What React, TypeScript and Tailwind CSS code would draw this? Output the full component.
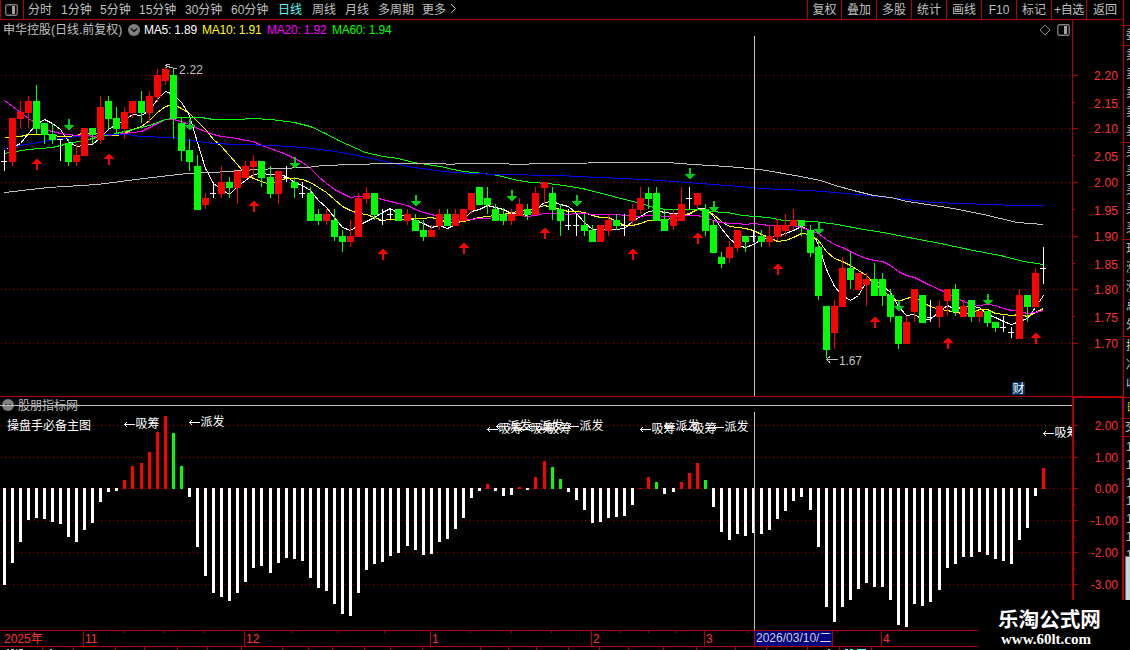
const periods = [
    { label: '分时', width: 'w-[33px]' },
    { label: '1分钟', width: 'w-[39px]' },
    { label: '5分钟', width: 'w-[39px]' },
    { label: '15分钟', width: 'w-[46px]' },
    { label: '30分钟', width: 'w-[46px]' },
    { label: '60分钟', width: 'w-[47px]' },
    { label: '日线', width: 'w-[34px]', active: true },
    { label: '周线', width: 'w-[33px]' },
    { label: '月线', width: 'w-[33px]' },
    { label: '多周期', width: 'w-[44px]' },
    { label: '更多', width: 'w-[27px]' },
]

const tools = [
    { label: '复权', width: 'w-[34px]' },
    { label: '叠加', width: 'w-[35px]' },
    { label: '多股', width: 'w-[35px]' },
    { label: '统计', width: 'w-[35px]' },
    { label: '画线', width: 'w-[35px]' },
    { label: 'F10', width: 'w-[35px]' },
    { label: '标记', width: 'w-[35px]' },
    { label: '+自选', width: 'w-[35px] tracking-[-0.4px]' },
    { label: '返回', width: 'w-[37px]' },
]

type Candle = [kind: string, top: number, bottom: number, high: number, low: number]

// r = up, g = down, w = doji (top and bottom are the same)
const candles: Candle[] = [
    ['w', 161, 161, 150, 171], ['r', 118, 162, 118, 166], ['r', 112, 119, 101, 128], ['r', 101, 113, 96, 128],
    ['g', 101, 129, 85, 134], ['g', 123, 135, 123, 144], ['g', 134, 140, 123, 144], ['w', 139, 139, 139, 161],
    ['g', 143, 162, 139, 166], ['r', 155, 162, 144, 166], ['r', 128, 156, 128, 156], ['g', 128, 135, 128, 144],
    ['r', 107, 140, 96, 144], ['g', 101, 119, 96, 129], ['g', 118, 129, 107, 134], ['r', 112, 129, 107, 139],
    ['r', 101, 113, 101, 118], ['g', 101, 113, 91, 123], ['r', 96, 113, 91, 123], ['r', 75, 97, 69, 102],
    ['r', 69, 81, 67, 85], ['g', 75, 119, 69, 139], ['g', 123, 151, 118, 161], ['g', 150, 162, 139, 171],
    ['g', 166, 210, 155, 210], ['r', 198, 205, 193, 209], ['w', 193, 193, 182, 198], ['r', 182, 194, 166, 198],
    ['g', 182, 188, 177, 198], ['r', 171, 188, 171, 204], ['r', 166, 178, 161, 178], ['r', 161, 167, 155, 178],
    ['g', 161, 178, 161, 187], ['g', 177, 194, 166, 198], ['r', 171, 194, 171, 204], ['w', 177, 177, 166, 182],
    ['g', 182, 188, 177, 198], ['w', 193, 193, 182, 198], ['g', 193, 221, 187, 221], ['g', 214, 221, 209, 225],
    ['r', 214, 221, 209, 225], ['g', 220, 237, 209, 241], ['g', 236, 242, 230, 252], ['r', 236, 242, 220, 247],
    ['r', 198, 237, 193, 237], ['r', 193, 199, 187, 204], ['g', 193, 215, 193, 220], ['w', 220, 220, 209, 225],
    ['w', 214, 214, 209, 219], ['g', 209, 221, 209, 221], ['r', 214, 221, 209, 225], ['g', 220, 231, 214, 231],
    ['g', 230, 237, 220, 241], ['r', 230, 237, 225, 237], ['r', 214, 226, 209, 230], ['g', 214, 226, 209, 226],
    ['r', 214, 226, 209, 226], ['r', 209, 221, 209, 221], ['r', 193, 210, 193, 214], ['g', 187, 205, 187, 205],
    ['g', 198, 205, 187, 214], ['g', 209, 221, 204, 221], ['g', 214, 221, 208, 225], ['r', 214, 221, 209, 225],
    ['r', 204, 216, 198, 216], ['g', 209, 215, 204, 220], ['r', 193, 215, 187, 215], ['r', 182, 188, 182, 204],
    ['g', 193, 210, 187, 220], ['g', 209, 221, 204, 236], ['w', 225, 225, 209, 230], ['w', 225, 225, 213, 236],
    ['g', 225, 231, 214, 236], ['g', 230, 242, 225, 242], ['r', 225, 242, 225, 242], ['r', 220, 231, 214, 236],
    ['g', 220, 226, 214, 230], ['w', 225, 225, 214, 236], ['r', 209, 221, 204, 225], ['r', 198, 210, 187, 214],
    ['g', 193, 199, 187, 209], ['g', 193, 221, 187, 221], ['g', 219, 231, 209, 231], ['r', 214, 226, 209, 230],
    ['r', 204, 221, 187, 221], ['w', 198, 198, 187, 209], ['r', 193, 205, 193, 209], ['g', 209, 231, 204, 236],
    ['g', 225, 253, 220, 253], ['g', 257, 264, 252, 268], ['r', 247, 258, 241, 263], ['r', 230, 248, 230, 252],
    ['g', 236, 242, 236, 252], ['w', 236, 236, 230, 242], ['g', 236, 242, 230, 247], ['r', 236, 242, 225, 247],
    ['r', 225, 237, 219, 241], ['r', 225, 231, 214, 236], ['r', 220, 226, 209, 230], ['g', 220, 226, 220, 236],
    ['g', 230, 253, 225, 257], ['g', 247, 296, 241, 300], ['g', 306, 350, 306, 358], ['r', 306, 333, 300, 349],
    ['r', 268, 307, 257, 307], ['g', 268, 280, 252, 289], ['r', 273, 290, 273, 290], ['r', 279, 285, 273, 306],
    ['g', 279, 296, 263, 296], ['g', 279, 296, 273, 306], ['g', 295, 317, 289, 322], ['g', 316, 344, 316, 349],
    ['r', 322, 344, 316, 344], ['r', 289, 312, 289, 322], ['g', 295, 323, 295, 323], ['w', 317, 317, 300, 322],
    ['r', 306, 317, 300, 327], ['r', 289, 301, 289, 316], ['g', 289, 312, 284, 316], ['r', 306, 317, 300, 317],
    ['g', 300, 317, 300, 322], ['r', 311, 317, 311, 322], ['g', 311, 323, 311, 327], ['g', 322, 328, 322, 332],
    ['w', 327, 327, 316, 332], ['w', 332, 332, 327, 338], ['r', 295, 339, 289, 339], ['g', 295, 307, 295, 322],
    ['r', 273, 307, 268, 307], ['w', 268, 268, 247, 284],
]

const histogram = [
    585, 563, 542, 520, 518, 519, 522, 524, 537, 542, 530, 523, 502, 492, 491, 480, 466, 463, 452, 432,
    416, 433, 466, 497, 547, 576, 593, 597, 601, 593, 582, 568, 566, 573, 563, 558, 559, 561, 578, 588,
    591, 604, 614, 616, 593, 570, 564, 562, 556, 553, 546, 550, 555, 554, 542, 539, 529, 518, 498, 491,
    484, 491, 496, 495, 487, 490, 477, 461, 467, 479, 492, 500, 510, 523, 522, 518, 517, 516, 505, 488,
    477, 482, 494, 492, 482, 473, 463, 480, 507, 532, 540, 534, 536, 533, 534, 530, 519, 511, 501, 497,
    510, 547, 607, 622, 607, 600, 589, 583, 587, 587, 600, 625, 627, 604, 606, 602, 590, 568, 564, 557,
    557, 552, 555, 559, 561, 564, 540, 528, 496, 468,
]
const fallingBars = [21, 22, 68, 69, 81, 87]

const buyArrows = [
    [37, 158], [109, 153], [254, 200], [383, 248], [464, 242], [545, 227],
    [633, 248], [698, 232], [778, 263], [875, 316], [948, 337], [1036, 332],
]
const sellArrows = [
    [69, 119], [190, 119], [295, 157], [416, 195], [512, 190], [577, 195],
    [690, 168], [714, 201], [819, 223], [899, 300], [988, 294],
]

const signals = [
    { x: 124, y: 423, text: '吸筹' },
    { x: 189, y: 421, text: '派发' },
    { x: 487, y: 428, text: '吸筹' },
    { x: 496, y: 425, text: '派发' },
    { x: 519, y: 428, text: '吸筹' },
    { x: 528, y: 425, text: '派发' },
    { x: 536, y: 428, text: '吸筹' },
    { x: 568, y: 425, text: '派发' },
    { x: 640, y: 428, text: '吸筹' },
    { x: 664, y: 425, text: '派发' },
    { x: 681, y: 428, text: '吸筹' },
    { x: 713, y: 426, text: '派发' },
    { x: 1043, y: 432, text: '吸筹' },
]

const ma60 =
    '4,153 28,149 52,147 68,143 84,140 100,136 116,133 132,129 149,125 165,119 181,117 201,117 213,119 237,119 253,118 270,119 294,122 310,126 325,133 338,140 365,152 383,156 398,158 413,162 440,166 453,169 463,171 483,173 498,175 513,179 530,182 548,183 563,185 582,188 613,196 640,203 657,208 667,209 697,209 707,211 727,212 742,215 768,217 783,220 813,221 837,224 863,229 883,232 903,236 940,243 973,250 1000,255 1023,261 1043,264'
const ma120 =
    '4,148 20,145 44,141 68,137 92,134 127,134 140,136 172,137 189,140 213,143 237,144 273,145 303,147 328,150 353,154 380,160 407,166 443,171 470,173 500,174 557,175 580,176 597,177 623,178 660,180 687,182 713,184 740,186 760,188 807,190 823,191 857,194 897,198 933,202 960,203 990,204 1017,205 1043,205'
const ma250 =
    '4,192 48,187 97,184 143,178 187,173 213,172 240,170 277,168 307,167 323,165 353,164 387,163 440,163 450,164 460,163 500,163 517,164 540,163 635,162 667,162 693,164 727,166 760,169 800,176 820,180 835,185 853,190 873,195 890,197 907,201 927,204 953,208 983,214 1017,222 1043,224'

const barX = (i: number) => 4 + 8 * i + Math.floor((i + 0.25) / 16.6)

const closes = candles.map(([kind, top, bottom]) => (kind === 'g' ? bottom : top))

// seed holds the leading values, whose window starts before the first candle
const average = (days: number, seed: number[]) =>
    closes
        .map((_, i) => {
            if (i < days - 1) return `${barX(i)},${seed[i]}`
            const sum = closes.slice(i - days + 1, i + 1).reduce((a, b) => a + b, 0)
            return `${barX(i)},${Math.round(sum / days)}`
        })
        .join(' ')

const ma5 = average(5, [148, 147, 143, 133])
const ma10 = average(10, [137, 137, 136, 134, 134, 134, 135, 136, 136])
const ma20 = average(
    20,
    [100, 106, 112, 118, 123, 129, 131, 133, 134, 135, 134, 136, 135, 135, 134, 133, 132, 131, 127]
)

const PanelIcon = () => (
    <svg width="13" height="12" viewBox="0 0 13 12" fill="none">
        <rect x="0.75" y="0.75" width="11.5" height="10.5" rx="1.5" stroke="#808080" strokeWidth="1.3" />
        <rect x="7" y="2" width="3" height="8" fill="#a0a0a0" />
    </svg>
)

const TopBar = () => (
    <div className="flex h-[20px] shrink-0 border-b border-[#b40000] leading-[20px] text-[#c0c0c0]">
        <div className="flex w-6 items-center border-x border-[#b40000] pl-1">
            <PanelIcon />
        </div>
        <div className="flex flex-1 items-start pl-1">
            {periods.map((p) => (
                <span
                    key={p.label}
                    className={`${p.width} shrink-0 whitespace-nowrap ${p.active ? 'text-[#54fcfc]' : ''}`}>
                    {p.label}
                </span>
            ))}
            <svg width="8" height="11" viewBox="0 0 8 11" fill="none" stroke="#c0c0c0" className="mt-[3px]">
                <path d="M2 1 L6.5 5.5 L2 10" />
            </svg>
        </div>
        {tools.map((t) => (
            <div
                key={t.label}
                className={`${t.width} shrink-0 whitespace-nowrap border-l border-[#b40000] text-center`}>
                {t.label}
            </div>
        ))}
    </div>
)

const InfoRow = () => (
    <div className="flex h-4 items-center whitespace-nowrap pl-[3px] pt-[3px] leading-4">
        <span className="w-[125px] text-[#c0c0c0]">申华控股(日线.前复权)</span>
        <svg width="12" height="12" viewBox="0 0 12 12" fill="none">
            <circle cx="6" cy="6" r="6" fill="#808080" />
            <path d="M3 4.5 L6 7.5 L9 4.5" stroke="#101010" strokeWidth="1.5" />
        </svg>
        <span className="ml-1 w-[58px] tracking-[-0.2px] text-white">MA5: 1.89</span>
        <span className="w-[65px] tracking-[-0.2px] text-[#ffff00]">MA10: 1.91</span>
        <span className="w-[65px] tracking-[-0.2px] text-[#ff00ff]">MA20: 1.92</span>
        <span className="tracking-[-0.2px] text-[#00ff00]">MA60: 1.94</span>
        <div className="ml-auto flex items-center gap-[6px] pr-[2px]">
            <svg width="12" height="12" viewBox="0 0 12 12" fill="none" stroke="#808080">
                <path d="M6 1 L11 6 L6 11 L1 6 Z" />
            </svg>
            <PanelIcon />
        </div>
    </div>
)

const GridLines = ({ rows }: { rows: number[] }) => (
    <g stroke="#a80000" strokeDasharray="1 3">
        {rows.map((y) => (
            <line key={y} x1="1" x2="1072" y1={y + 0.5} y2={y + 0.5} />
        ))}
    </g>
)

const candleColor: Record<string, string> = { r: '#ff0000', g: '#00ff00', w: '#ffffff' }

const PriceChart = () => (
    <svg width="1072" height="360" viewBox="0 36 1072 360" shapeRendering="crispEdges" className="block">
        <GridLines rows={[75, 128, 182, 236, 289, 343]} />
        <g fill="none" strokeWidth="1" transform="translate(0.5 0.5)">
            <polyline points={ma5} stroke="#ffffff" />
            <polyline points={ma10} stroke="#ffff00" />
            <polyline points={ma20} stroke="#ff00ff" />
            <polyline points={ma60} stroke="#00ff00" />
            <polyline points={ma120} stroke="#0000ff" />
            <polyline points={ma250} stroke="#c0c0c0" />
        </g>
        {candles.map(([kind, top, bottom, high, low], i) => (
            <g key={i} fill={candleColor[kind]}>
                <rect x={barX(i)} y={high} width="1" height={low - high} />
                <rect
                    x={barX(i) - 3}
                    y={top}
                    width={kind === 'w' ? 6 : 7}
                    height={Math.max(1, bottom - top)}
                />
            </g>
        ))}
        {buyArrows.map(([x, y]) => (
            <path
                key={x}
                d={`M${x} ${y} l5 6 h-4 v6 h-2 v-6 h-4 Z`}
                fill="#ff0000"
            />
        ))}
        {sellArrows.map(([x, y]) => (
            <path
                key={x}
                d={`M${x} ${y + 12} l5 -6 h-4 v-6 h-2 v6 h-4 Z`}
                fill="#00d010"
            />
        ))}
        <g fill="none" stroke="#c0c0c0">
            <path d="M165.5 65.5 l4 1.5 l7 2 M166 68 v-4 h4" />
            <path d="M826 359.5 h12 M830 356.5 l-3.5 3 l3.5 3" />
            <line x1="754.5" x2="754.5" y1="36" y2="396" />
        </g>
        <g fill="#c0c0c0">
            <text x="179" y="74" textLength="24">2.22</text>
            <text x="839" y="365" textLength="23">1.67</text>
        </g>
        <rect x="1012" y="382" width="13" height="13" fill="#003366" />
        <text x="1012.5" y="393" fill="#ffffff">财</text>
    </svg>
)

const PriceAxis = () => (
    <svg width="50" height="376" viewBox="1073 20 50 376" className="block">
        <g stroke="#b40000" shapeRendering="crispEdges">
            {[75, 128, 182, 236, 289, 343].map((y) => (
                <line key={y} x1="1073" x2="1078" y1={y + 0.5} y2={y + 0.5} />
            ))}
            {[102, 155, 209, 263, 316].map((y) => (
                <line key={y} x1="1073" x2="1075" y1={y + 0.5} y2={y + 0.5} />
            ))}
        </g>
        <g fill="#ff3232">
            {[75, 103, 128, 156, 182, 210, 236, 264, 289, 317, 343].map((y, i) => (
                <text key={y} x="1094" y={y + 5} textLength="24">
                    {(2.2 - i * 0.05).toFixed(2)}
                </text>
            ))}
        </g>
    </svg>
)

const IndicatorHeader = () => (
    <div className="relative flex h-[15px] items-center gap-1 pl-[2px] leading-[15px] text-[#c0c0c0]">
        <svg width="12" height="12" viewBox="0 0 12 12">
            <circle cx="6" cy="6" r="6" fill="#808080" />
            <path d="M3 5 h2 v2 h-2 Z M7 5 h2 v2 h-2 Z" fill="#303030" />
        </svg>
        <span className="pt-[3px]">股朋指标网</span>
        <div className="absolute inset-x-0 top-2 h-px bg-[#c0c0c0]" />
    </div>
)

const IndicatorChart = () => (
    <svg width="1072" height="218" viewBox="0 412 1072 218" shapeRendering="crispEdges" className="block">
        <GridLines rows={[425, 457, 488, 520, 552, 584]} />
        {histogram.map((y, i) => {
            if (y > 489)
                return <rect key={i} x={barX(i) - 1} y="488" width="3" height={y - 488} fill="#ffffff" />
            return (
                <rect
                    key={i}
                    x={barX(i) - 1}
                    y={y}
                    width="3"
                    height={489 - y}
                    fill={fallingBars.includes(i) ? '#00ff00' : '#ff0000'}
                />
            )
        })}
        <text x="7" y="430" fill="#ffffff">操盘手必备主图</text>
        {signals.map(({ x, y, text }) => (
            <g key={x}>
                <path
                    d={`M${x + 1} ${y + 1.5} h10 M${x + 3} ${y - 1} l-2 2.5 l2 2.5`}
                    fill="none"
                    stroke="#ffffff"
                />
                <text x={x + 11.5} y={y + 5} fill="#ffffff">{text}</text>
            </g>
        ))}
        <line x1="754.5" x2="754.5" y1="412" y2="630" stroke="#c0c0c0" />
    </svg>
)

const IndicatorAxis = () => (
    <svg width="48" height="231" viewBox="1074 398 48 231" className="block">
        <g stroke="#b40000" shapeRendering="crispEdges">
            {[425, 457, 488, 520, 552, 584].map((y) => (
                <line key={y} x1="1074" x2="1078" y1={y + 0.5} y2={y + 0.5} />
            ))}
            {[441, 473, 504, 536, 568].map((y) => (
                <line key={y} x1="1074" x2="1075" y1={y + 0.5} y2={y + 0.5} />
            ))}
        </g>
        <g fill="#ff3232" textAnchor="end">
            {[425, 457, 488, 520, 552, 584].map((y, i) => (
                <text key={y} x="1118" y={y + 5}>
                    {(2 - i).toFixed(2)}
                </text>
            ))}
        </g>
    </svg>
)

const months = [
    { label: '2025年', width: 'w-[83px]', pad: 'pl-1' },
    { label: '11', width: 'w-[161px]', pad: 'border-l pl-px' },
    { label: '12', width: 'w-[186px]', pad: 'border-l pl-px' },
    { label: '1', width: 'w-[161px]', pad: 'border-l pl-px' },
    { label: '2', width: 'w-[113px]', pad: 'border-l pl-px' },
    { label: '3', width: 'w-[50px]', pad: 'border-l pl-px' },
]

const dayTicks = [123, 164, 204, 291, 337, 384, 470, 511, 551, 619, 648, 676, 748, 837]
const footerTicks = [
    42, 73, 115, 144, 177, 207, 241, 282, 308, 332, 364, 390, 422, 480, 508, 536, 568, 599, 628, 663, 696,
    735, 766, 807, 839, 871,
]

const TimeAxis = () => (
    <div className="relative h-5 w-[978px]">
        <div className="flex h-[17px] border-y border-[#b40000] leading-[16px] text-[#ff3232]">
            {months.map((m) => (
                <div key={m.label} className={`${m.width} ${m.pad} shrink-0 border-[#b40000]`}>
                    {m.label}
                </div>
            ))}
            <div className="w-[79px] shrink-0 whitespace-nowrap border-x border-[#b40000] bg-[#000080] pl-px leading-[14px] text-[#d0d0d0]">
                2026/03/10/二
            </div>
            <div className="w-12 shrink-0" />
            <div className="border-l border-[#b40000] pl-px">4</div>
        </div>
        <svg
            width="978"
            height="20"
            viewBox="0 0 978 20"
            shapeRendering="crispEdges"
            className="absolute left-0 top-0">
            <g fill="#b40000">
                {dayTicks.map((x) => (
                    <rect key={x} x={x} y="1" width="1" height="2" />
                ))}
                {footerTicks.map((x) => (
                    <rect key={x} x={x} y="17" width="1" height="3" />
                ))}
            </g>
            <path d="M7 19.5 h2 m2 0 h3 m2 0 h1 m2 0 h4 M50 19.5 h2 M828 19.5 h2" stroke="#c0c0c0" />
            <path d="M845 19.5 h3 m2 0 h3 m4 0 h9" stroke="#54fcfc" />
        </svg>
    </div>
)

const quoteGroups = [
    { height: 'h-[20px]', rows: ['委'] },
    { height: 'h-[97px]', rows: ['卖', '卖', '卖', '卖', '卖'] },
    { height: 'h-[97px]', rows: ['买', '买', '买', '买', '买'] },
    { height: 'h-[97px]', rows: ['现', '涨', '涨', '总', '外'] },
    { height: 'h-[61px]', rows: ['换', '净', '收'] },
]

// only the left edge of the quote panel is visible
const QuoteStrip = () => (
    <div className="flex w-[7px] shrink-0 flex-col overflow-hidden border-l border-[#b40000] pt-[25px] text-[#c0c0c0]">
        {quoteGroups.map((g) => (
            <div key={g.rows[0]} className={`${g.height} shrink-0 border-t border-[#b40000] pl-[2px]`}>
                {g.rows.map((r, i) => (
                    <div key={i} className="h-[19px] w-3 leading-[19px]">{r}</div>
                ))}
            </div>
        ))}
        <div className="h-[21px] shrink-0 border-t border-[#b40000] pl-[3px] leading-[20px] text-[#c8c800]">
            <div className="w-3">时</div>
        </div>
        <div className="h-[19px] shrink-0 border-y border-[#b40000] pl-px leading-[17px]">
            <div className="w-3">交</div>
        </div>
        <div className="h-[119px] shrink-0 overflow-hidden pl-[2px] pt-px">
            {[0, 1, 2, 3, 4, 5, 6].map((i) => (
                <div key={i} className="h-[18px] w-3 leading-[18px]">1</div>
            ))}
        </div>
        <div className="ml-px h-[44px] shrink-0 border-l border-t border-[#707070] bg-[#c4d8e0]" />
    </div>
)

const App = () => {
    return (
        <div className="relative flex h-[650px] w-[1130px] overflow-hidden bg-black font-['Liberation_Sans','Noto_Sans_CJK_SC',sans-serif] text-[12px]">
            <div className="flex w-[1123px] shrink-0 flex-col">
                <TopBar />
                <div className="flex h-[376px] shrink-0">
                    <div className="w-[1072px] shrink-0">
                        <InfoRow />
                        <PriceChart />
                    </div>
                    <div className="border-l border-[#b40000]">
                        <PriceAxis />
                    </div>
                </div>
                <div className="flex h-[234px] shrink-0">
                    <div className="w-[1072px] shrink-0 border-t border-[#b40000]">
                        <IndicatorHeader />
                        <IndicatorChart />
                    </div>
                    <div className="w-[51px] shrink-0 border-2 border-b-0 border-r border-[#b40000]">
                        <IndicatorAxis />
                    </div>
                </div>
                <TimeAxis />
            </div>
            <QuoteStrip />
            <div className="absolute bottom-0 right-0 flex h-[50px] w-[152px] flex-col bg-black pl-5 pt-2 text-white">
                <div className="text-[20.6px] font-bold leading-[23px]">乐淘公式网</div>
                <div className="pl-[3px] font-['Liberation_Serif',serif] text-[15px] font-bold leading-4">
                    www.60lt.com
                </div>
            </div>
        </div>
    )
}

export default App
